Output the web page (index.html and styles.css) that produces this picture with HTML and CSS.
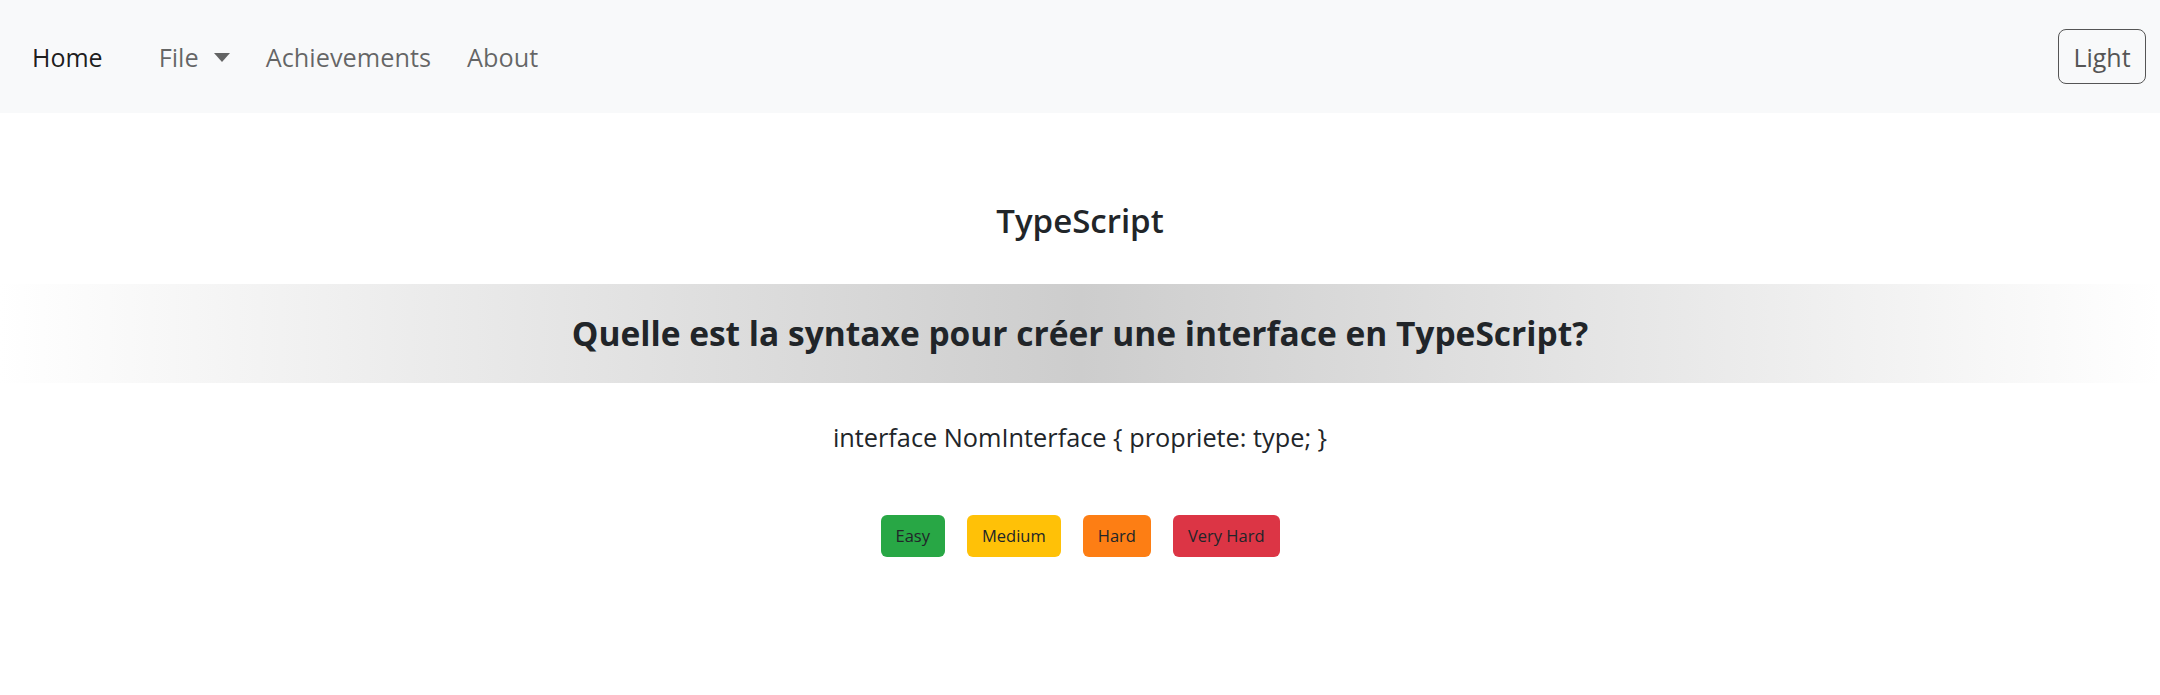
FILE: index.html
```html
<!DOCTYPE html>
<html lang="fr">
<head>
<meta charset="utf-8">
<title>TypeScript Quiz</title>
<link rel="stylesheet" href="styles.css">
</head>
<body>
<nav class="navbar">
  <a class="brand" href="#">Home</a>
  <ul class="nav">
    <li><a class="nav-link dropdown" href="#">File<span class="caret"></span></a></li>
    <li><a class="nav-link" href="#">Achievements</a></li>
    <li><a class="nav-link" href="#">About</a></li>
  </ul>
  <button class="theme-btn" type="button">Light</button>
</nav>
<main class="quiz">
  <h2 class="topic">TypeScript</h2>
  <div class="question-band">
    <h1 class="question">Quelle est la syntaxe pour créer une interface en TypeScript?</h1>
  </div>
  <p class="answer">interface NomInterface { propriete: type; }</p>
  <div class="levels">
    <button class="level easy" type="button">Easy</button>
    <button class="level medium" type="button">Medium</button>
    <button class="level hard" type="button">Hard</button>
    <button class="level very-hard" type="button">Very Hard</button>
  </div>
</main>
</body>
</html>
```
FILE: styles.css
```css
* { box-sizing: border-box; }
body {
  margin: 0;
  font-family: "Open Sans", "Noto Sans", sans-serif;
  color: #212529;
  background: #fff;
}
.navbar {
  height: 113px;
  background: #f8f9fa;
  display: flex;
  align-items: center;
  padding: 0 14px 0 32px;
}
.brand {
  font-size: 25px;
  color: rgba(0,0,0,.9);
  text-decoration: none;
  margin-right: 38px;
}
.nav {
  list-style: none;
  margin: 0;
  padding: 0;
  display: flex;
}
.nav-link {
  display: flex;
  align-items: center;
  font-size: 25.3px;
  color: rgba(0,0,0,.6);
  text-decoration: none;
  padding: 0 18px;
}
.caret {
  display: inline-block;
  margin-left: 15px;
  border-top: 9px solid rgba(0,0,0,.6);
  border-left: 8px solid transparent;
  border-right: 8px solid transparent;
  margin-top: 2px;
}
.theme-btn {
  margin-left: auto;
  width: 88px;
  height: 55px;
  border: 1px solid #555;
  border-radius: 8px;
  background: transparent;
  font-family: inherit;
  font-size: 25px;
  color: #555;
  padding: 0;
}
.quiz {
  text-align: center;
}
.topic {
  margin: 88px 0 0;
  font-size: 33px;
  font-weight: 600;
  line-height: 1.2;
}
.question-band {
  margin-top: 43px;
  height: 99px;
  display: flex;
  align-items: center;
  justify-content: center;
  background: linear-gradient(to right, #fff, #cdcdcd 50%, #fff);
}
.question {
  margin: 0;
  font-size: 33.5px;
  font-weight: 700;
  line-height: 1.2;
}
.answer {
  margin: 36px 0 0;
  font-size: 25.3px;
  line-height: 1.5;
}
.levels {
  margin-top: 58px;
  display: flex;
  justify-content: center;
  gap: 22px;
}
.level {
  height: 42px;
  padding: 0 15px;
  border: 0;
  border-radius: 6px;
  font-family: inherit;
  font-size: 16.5px;
  color: #212529;
}
.easy { background: #28a745; }
.medium { background: #ffc107; }
.hard { background: #fd7e14; }
.very-hard { background: #dc3545; }
```
